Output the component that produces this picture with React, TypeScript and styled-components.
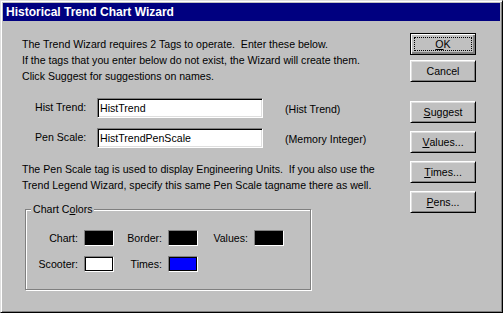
import styled, { createGlobalStyle } from 'styled-components';

const GlobalStyle = createGlobalStyle`
  html, body {
    margin: 0;
    padding: 0;
    background: #c0c0c0;
  }
  body {
    font-family: 'Liberation Sans', Arial, sans-serif;
    font-size: 10.6px;
    color: #000;
  }
`;

const introLines = [
  'The Trend Wizard requires 2 Tags to operate.  Enter these below.',
  'If the tags that you enter below do not exist, the Wizard will create them.',
  'Click Suggest for suggestions on names.',
];

const noteLines = [
  'The Pen Scale tag is used to display Engineering Units.  If you also use the',
  'Trend Legend Wizard, specify this same Pen Scale tagname there as well.',
];

const fields = [
  { label: 'Hist Trend:', value: 'HistTrend', kind: '(Hist Trend)' },
  { label: 'Pen Scale:', value: 'HistTrendPenScale', kind: '(Memory Integer)' },
];

const colors = [
  { label: 'Chart:', color: '#000000' },
  { label: 'Border:', color: '#000000' },
  { label: 'Values:', color: '#000000' },
  { label: 'Scooter:', color: '#ffffff' },
  { label: 'Times:', color: '#0000ff' },
];

export default function App() {
  return (
    <>
      <GlobalStyle />
      <Window>
        <TitleBar>Historical Trend Chart Wizard</TitleBar>
        <Body>
          <Main>
            <Text>
              {introLines.map((l) => (
                <div key={l}>{l}</div>
              ))}
            </Text>
            <Fields>
              {fields.map((f) => (
                <FieldRow key={f.label}>
                  <FieldLabel>{f.label}</FieldLabel>
                  <TextBox>{f.value}</TextBox>
                  <FieldKind>{f.kind}</FieldKind>
                </FieldRow>
              ))}
            </Fields>
            <Note>
              {noteLines.map((l) => (
                <div key={l}>{l}</div>
              ))}
            </Note>
            <Group>
              <Legend>
                Chart C<u>o</u>lors
              </Legend>
              <ColorGrid>
                {colors.map((c) => (
                  <ColorItem key={c.label}>
                    <ColorLabel>{c.label}</ColorLabel>
                    <Swatch $color={c.color} />
                  </ColorItem>
                ))}
              </ColorGrid>
            </Group>
          </Main>
          <Side>
            <Button $default>
              <Focus>
                <u>O</u>K
              </Focus>
            </Button>
            <Button>Cancel</Button>
            <Button $gap={19}>
              <u>S</u>uggest
            </Button>
            <Button $gap={8}>
              <u>V</u>alues...
            </Button>
            <Button $gap={8}>
              <u>T</u>imes...
            </Button>
            <Button $gap={8}>
              <u>P</u>ens...
            </Button>
          </Side>
        </Body>
      </Window>
    </>
  );
}

const Window = styled.div`
  box-sizing: border-box;
  width: 503px;
  height: 313px;
  display: flex;
  flex-direction: column;
  background: #c0c0c0;
  border: 1px solid;
  border-color: #dfdfdf #000 #000 #dfdfdf;
  box-shadow: inset 1px 1px #fff, inset -1px -1px #808080;
  padding: 2px;
`;

const TitleBar = styled.div`
  height: 18px;
  background: #000080;
  color: #fff;
  font-weight: bold;
  font-size: 12px;
  line-height: 18px;
  padding-left: 3px;
  white-space: nowrap;
`;

const Body = styled.div`
  flex: 1;
  display: flex;
  justify-content: space-between;
  padding: 0 24px 0 19px;
`;

const Main = styled.div`
  display: flex;
  flex-direction: column;
`;

const Text = styled.div`
  margin-top: 15px;
  line-height: 16px;
  white-space: pre;
`;

const Note = styled(Text)`
  margin-top: 13px;
`;

const Fields = styled.div`
  margin-top: 14px;
  padding-left: 13px;
  display: flex;
  flex-direction: column;
  gap: 10px;
`;

const FieldRow = styled.div`
  display: flex;
  align-items: center;
  height: 20px;
`;

const FieldLabel = styled.div`
  width: 62px;
  margin-top: -3px;
`;

const TextBox = styled.div`
  box-sizing: border-box;
  width: 166px;
  height: 20px;
  line-height: 18px;
  padding-left: 2px;
  background: #fff;
  border: 1px solid;
  border-color: #808080 #fff #fff #808080;
  box-shadow: inset 1px 1px #000, inset -1px -1px #dfdfdf;
  white-space: nowrap;
`;

const FieldKind = styled.div`
  margin-left: 22px;
  margin-top: 2px;
`;

const Group = styled.fieldset`
  box-sizing: border-box;
  margin: 8px 0 0 3px;
  padding: 13px 0 0 0;
  width: 286px;
  height: 89px;
  min-width: 0;
  border: 1px solid #808080;
  box-shadow: inset 1px 1px #fff, 1px 1px #fff;
`;

const Legend = styled.legend`
  margin-left: 5px;
  padding: 0 2px;
  line-height: 16px;
  background: #c0c0c0;
`;

const ColorGrid = styled.div`
  display: grid;
  grid-template-columns: 88px 84px 86px;
  row-gap: 10px;
`;

const ColorItem = styled.div`
  display: flex;
  align-items: center;
  justify-content: flex-end;
  gap: 6px;
  height: 16px;
`;

const ColorLabel = styled.span`
  white-space: nowrap;
  margin-top: -1px;
`;

const Swatch = styled.div<{ $color: string }>`
  box-sizing: border-box;
  width: 30px;
  height: 16px;
  background: ${({ $color }) => $color};
  border: 1px solid;
  border-color: #808080 #fff #fff #808080;
  box-shadow: inset 0 0 0 1px #000;
`;

const Side = styled.div`
  display: flex;
  flex-direction: column;
  padding-top: 12px;
  gap: 5px;
`;

const Button = styled.button<{ $default?: boolean; $gap?: number }>`
  box-sizing: border-box;
  width: 66px;
  height: 22px;
  margin: 0;
  margin-top: ${({ $gap }) => ($gap ? $gap - 5 : 0)}px;
  padding: 0;
  font: inherit;
  color: #000;
  background: #c0c0c0;
  display: flex;
  align-items: center;
  justify-content: center;
  border: 1px solid;
  border-color: ${({ $default }) => ($default ? '#000' : '#fff #000 #000 #fff')};
  box-shadow: ${({ $default }) =>
    $default
      ? 'inset 1px 1px #fff, inset -1px -1px #808080, inset -2px -2px #808080'
      : 'inset 1px 1px #dfdfdf, inset -1px -1px #808080'};
  u {
    text-decoration-thickness: 1px;
    text-underline-offset: 1px;
  }
`;

const Focus = styled.span`
  box-sizing: border-box;
  width: 58px;
  height: 14px;
  border: 1px dotted #000;
  display: flex;
  align-items: center;
  justify-content: center;
`;
